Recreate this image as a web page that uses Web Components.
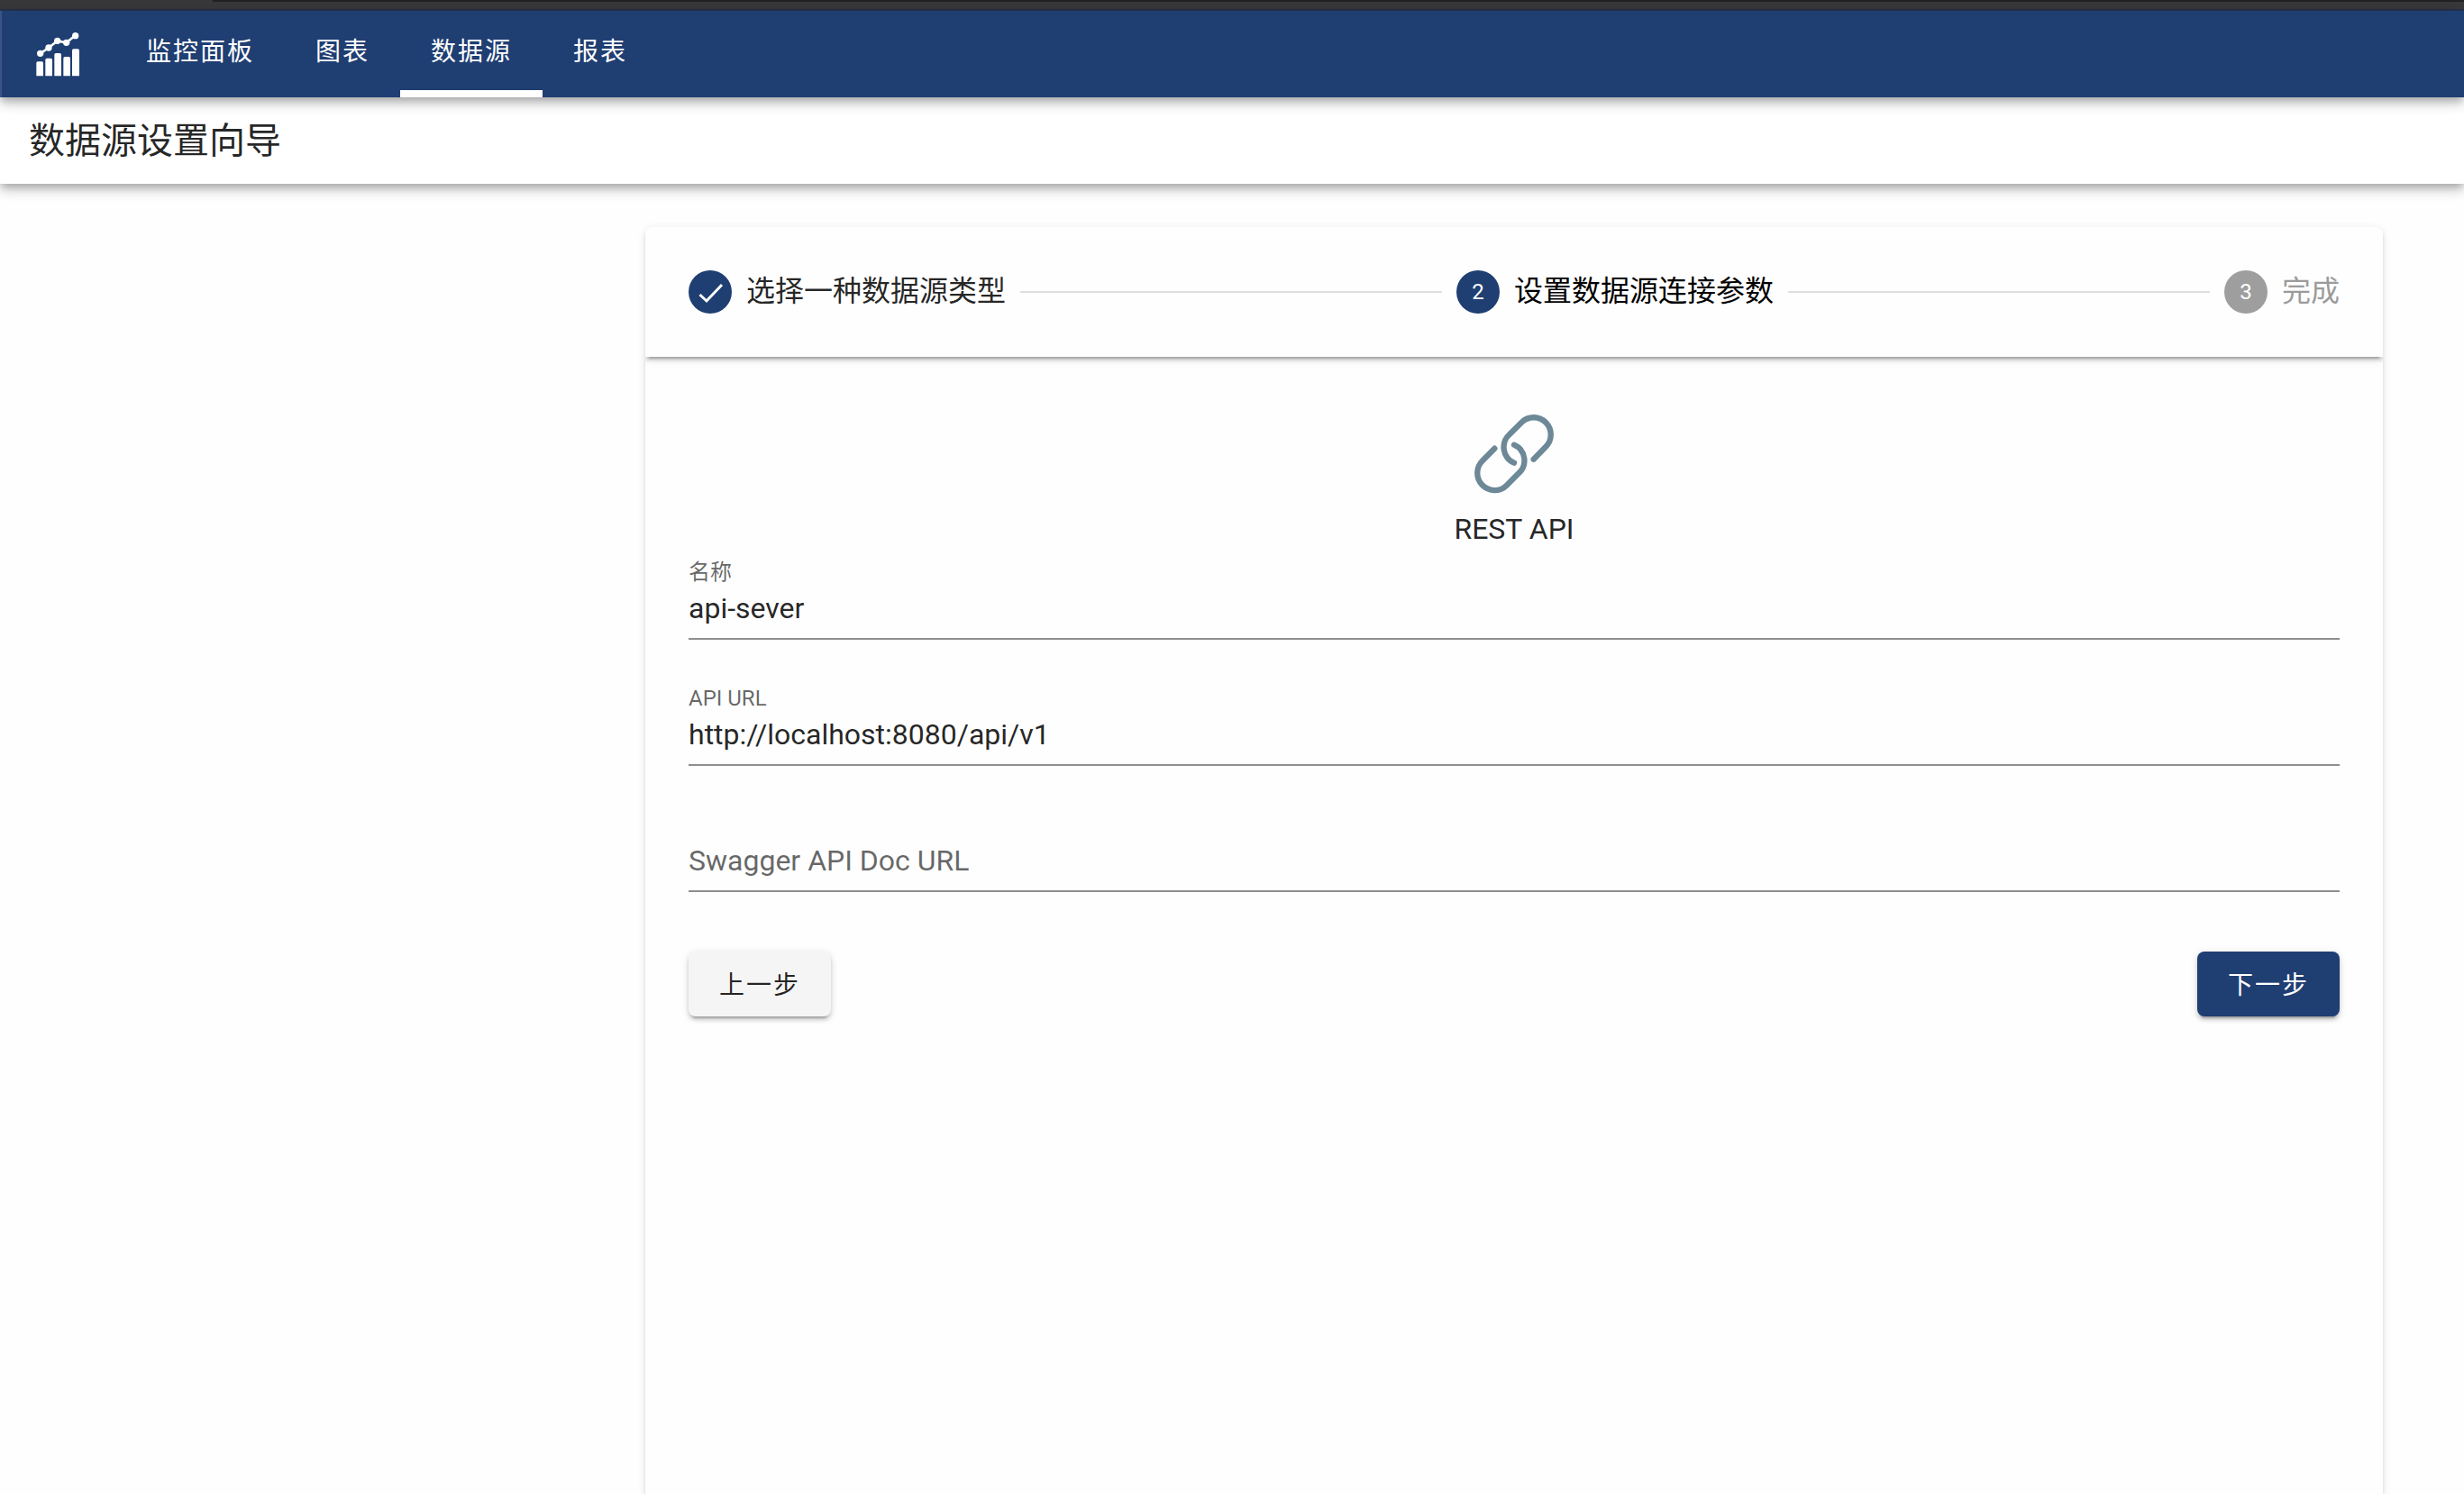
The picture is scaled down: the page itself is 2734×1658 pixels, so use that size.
<!DOCTYPE html>
<html lang="zh-CN">
<head>
<meta charset="utf-8">
<title>数据源设置向导</title>
<style>
  html { --primary: #1f3e72; --ink: rgba(0,0,0,.87); --muted: rgba(0,0,0,.6); }
  body { margin: 0; background: #fefefe; color: var(--ink); font-family: Roboto, "Noto Sans CJK SC", sans-serif; font-size: 32px; }
</style>
</head>
<body>
<wizard-app></wizard-app>
<script>
class Base extends HTMLElement {
  connectedCallback() {
    if (this.shadowRoot) return;
    this.attachShadow({ mode: 'open' }).innerHTML =
      '<style>*{box-sizing:border-box}' + this.styles() + '</style>' + this.markup();
  }
}

/* Application bar with the chart logo and the main tabs */
customElements.define('app-bar', class extends Base {
  styles() { return `
    :host { display: block; position: relative; z-index: 2; }
    .strip { display: flex; height: 12px; background: #38373a; border-bottom: 2px solid #26324a; }
    .strip i { flex: 1; margin-left: 236px; height: 2px; background: #202124; }
    header { display: flex; height: 96px; background: var(--primary); border-left: 2px solid #3a5584; padding-left: 38px;
      box-shadow: 0 4px 8px -2px rgba(0,0,0,.2), 0 8px 10px rgba(0,0,0,.14), 0 2px 20px rgba(0,0,0,.12); }
    svg { width: 48px; height: 50px; margin: 23px 40px 0 0; fill: #fff; }
    nav { display: flex; }`; }
  markup() { return `
    <div class="strip"><i></i></div>
    <header>
      <svg viewBox="60 44 144 150" aria-hidden="true">
        <path d="M61 192v-43q0-5 5-5h13q5 0 5 5v43zM91 192v-54q0-5 5-5h13q5 0 5 5v54zM121 192v-71q0-5 5-5h13q5 0 5 5v71zM151 192v-59q0-5 5-5h13q5 0 5 5v59zM180 192v-85q0-5 5-5h14q5 0 5 5v85z"/>
        <path d="M74 117 102 98 131 75 161 81 191 57" fill="none" stroke="#fff" stroke-width="8"/>
        <circle cx="74" cy="117" r="11"/><circle cx="102" cy="98" r="11"/><circle cx="131" cy="75" r="11"/><circle cx="161" cy="81" r="11"/><circle cx="191" cy="58" r="11"/>
      </svg>
      <nav><slot></slot></nav>
    </header>`; }
});

customElements.define('nav-tab', class extends Base {
  styles() { return `
    :host { display: flex; }
    a { display: flex; align-items: center; padding: 0 34px 2px; border-bottom: 8px solid transparent;
      color: #fff; font-size: 28px; letter-spacing: 2px; text-decoration: none; white-space: nowrap; }
    :host([active]) a { border-bottom-color: #fff; }`; }
  markup() { return `<a href="#"><slot></slot></a>`; }
});

customElements.define('page-title', class extends Base {
  styles() { return `
    :host { display: block; position: relative; z-index: 1; background: #fff;
      box-shadow: 0 4px 8px -2px rgba(0,0,0,.2), 0 8px 10px rgba(0,0,0,.14), 0 2px 20px rgba(0,0,0,.12); }
    h1 { display: flex; align-items: center; height: 96px; margin: 0; padding: 2px 32px 0; font-size: 40px; font-weight: 400; line-height: 48px; }`; }
  markup() { return `<h1><slot></slot></h1>`; }
});

/* One step: a round badge and its label */
customElements.define('wizard-step', class extends Base {
  styles() { return `
    :host { display: flex; align-items: center; gap: 16px; color: var(--ink); }
    :host([state="active"]) { color: #000; }
    :host([state="todo"]) { color: #9b9b9b; }
    .badge { display: flex; align-items: center; justify-content: center; width: 48px; height: 48px;
      border-radius: 50%; background: var(--primary); color: #fff; font-size: 24px; }
    :host([state="todo"]) .badge { background: #9e9e9e; }
    .label { padding-bottom: 2px; line-height: 46px; white-space: nowrap; }
    svg { width: 48px; height: 48px; fill: none; stroke: #fff; stroke-width: 3; }`; }
  markup() {
    const mark = this.getAttribute('state') === 'done'
      ? '<svg viewBox="0 0 48 48" aria-hidden="true"><path d="M12.500 27 20 34 37 16"/></svg>'
      : this.getAttribute('number');
    return `<span class="badge">${mark}</span><span class="label"><slot></slot></span>`;
  }
});

customElements.define('wizard-steps', class extends Base {
  styles() { return `
    :host { display: flex; align-items: center; gap: 16px; height: 144px; padding: 0 48px;
      box-shadow: 0 6px 2px -4px rgba(0,0,0,.2), 0 4px 4px rgba(0,0,0,.14), 0 2px 10px rgba(0,0,0,.12); }
    hr { flex: 1; margin: 0; border: 0; border-top: 2px solid rgba(0,0,0,.12); }`; }
  markup() { return `<slot name="first"></slot><hr><slot name="second"></slot><hr><slot name="third"></slot>`; }
});

customElements.define('source-type', class extends Base {
  styles() { return `
    :host { display: flex; flex-direction: column; align-items: center; gap: 12px; }
    svg { width: 96px; height: 96px; fill: none; stroke: #6d8896; stroke-width: 19; stroke-linecap: round; stroke-linejoin: round; }
    span { line-height: 46px; }`; }
  markup() { return `
    <svg viewBox="126 48 288 288" aria-hidden="true">
      <path d="M335 209 375 168A57 57 0 0 0 295 86L255 126A57 57 0 0 0 270 221"/>
      <path d="M205 173 165 214A57 57 0 0 0 245 296L285 256A57 57 0 0 0 270 161"/>
    </svg><span><slot></slot></span>`; }
});

/* Text box whose label rests inside it while it is empty */
customElements.define('text-field', class extends Base {
  styles() { return `
    :host { display: block; }
    div { display: grid; grid-template: 30px 60px / 1fr; }
    label { grid-area: 1 / 1; color: var(--muted); font-size: 24px; line-height: 30px; }
    input { grid-area: 2 / 1; width: 100%; padding: 0 0 8px; border: 0; border-bottom: 2px solid #8f8f8f; border-radius: 0; outline: 0;
      background: transparent; color: var(--ink); font: inherit; }
    .empty label { grid-area: 2 / 1; font-size: 32px; line-height: 50px; pointer-events: none; }`; }
  markup() {
    const value = this.getAttribute('value') || '';
    return `<div class="${value ? '' : 'empty'}"><label for="box">${this.getAttribute('label')}</label>
      <input id="box" type="text" value="${value}"></div>`;
  }
  connectedCallback() {
    super.connectedCallback();
    const box = this.shadowRoot.querySelector('input');
    box.addEventListener('input', () => box.parentElement.classList.toggle('empty', !box.value));
  }
});

customElements.define('raised-button', class extends Base {
  styles() { return `
    :host { display: block; }
    button { height: 72px; padding: 0 34px 2px; border: 0; border-radius: 8px; background: #f5f5f5; color: var(--ink);
      font-family: inherit; font-size: 28px; letter-spacing: 2px; cursor: pointer;
      box-shadow: 0 6px 2px -4px rgba(0,0,0,.2), 0 4px 4px rgba(0,0,0,.14), 0 2px 10px rgba(0,0,0,.12); }
    :host([primary]) button { background: var(--primary); color: #fff; }`; }
  markup() { return `<button type="button"><slot></slot></button>`; }
});

customElements.define('wizard-app', class extends Base {
  styles() { return `
    :host { display: flex; flex-direction: column; min-height: 100vh; }
    main { flex: 1; display: flex; padding: 48px 90px 0 716px; }
    .card { flex: 1; min-width: 0; overflow: hidden; border-radius: 8px 8px 0 0; background: #fefefe;
      box-shadow: 0 4px 4px rgba(0,0,0,.1), 0 2px 10px rgba(0,0,0,.1); }
    form { padding: 60px 48px 48px; }
    .fields { display: flex; flex-direction: column; gap: 50px; padding: 10px 0 66px; }
    .actions { display: flex; justify-content: space-between; }`; }
  markup() { return `
    <app-bar>
      <nav-tab>监控面板</nav-tab><nav-tab>图表</nav-tab><nav-tab active>数据源</nav-tab><nav-tab>报表</nav-tab>
    </app-bar>
    <page-title>数据源设置向导</page-title>
    <main><section class="card">
      <wizard-steps>
        <wizard-step slot="first" state="done">选择一种数据源类型</wizard-step>
        <wizard-step slot="second" state="active" number="2">设置数据源连接参数</wizard-step>
        <wizard-step slot="third" state="todo" number="3">完成</wizard-step>
      </wizard-steps>
      <form>
        <source-type>REST API</source-type>
        <div class="fields">
          <text-field label="名称" value="api-sever"></text-field>
          <text-field label="API URL" value="http://localhost:8080/api/v1"></text-field>
          <text-field label="Swagger API Doc URL"></text-field>
        </div>
        <div class="actions"><raised-button>上一步</raised-button><raised-button primary>下一步</raised-button></div>
      </form>
    </section></main>`; }
});
</script>
</body>
</html>
